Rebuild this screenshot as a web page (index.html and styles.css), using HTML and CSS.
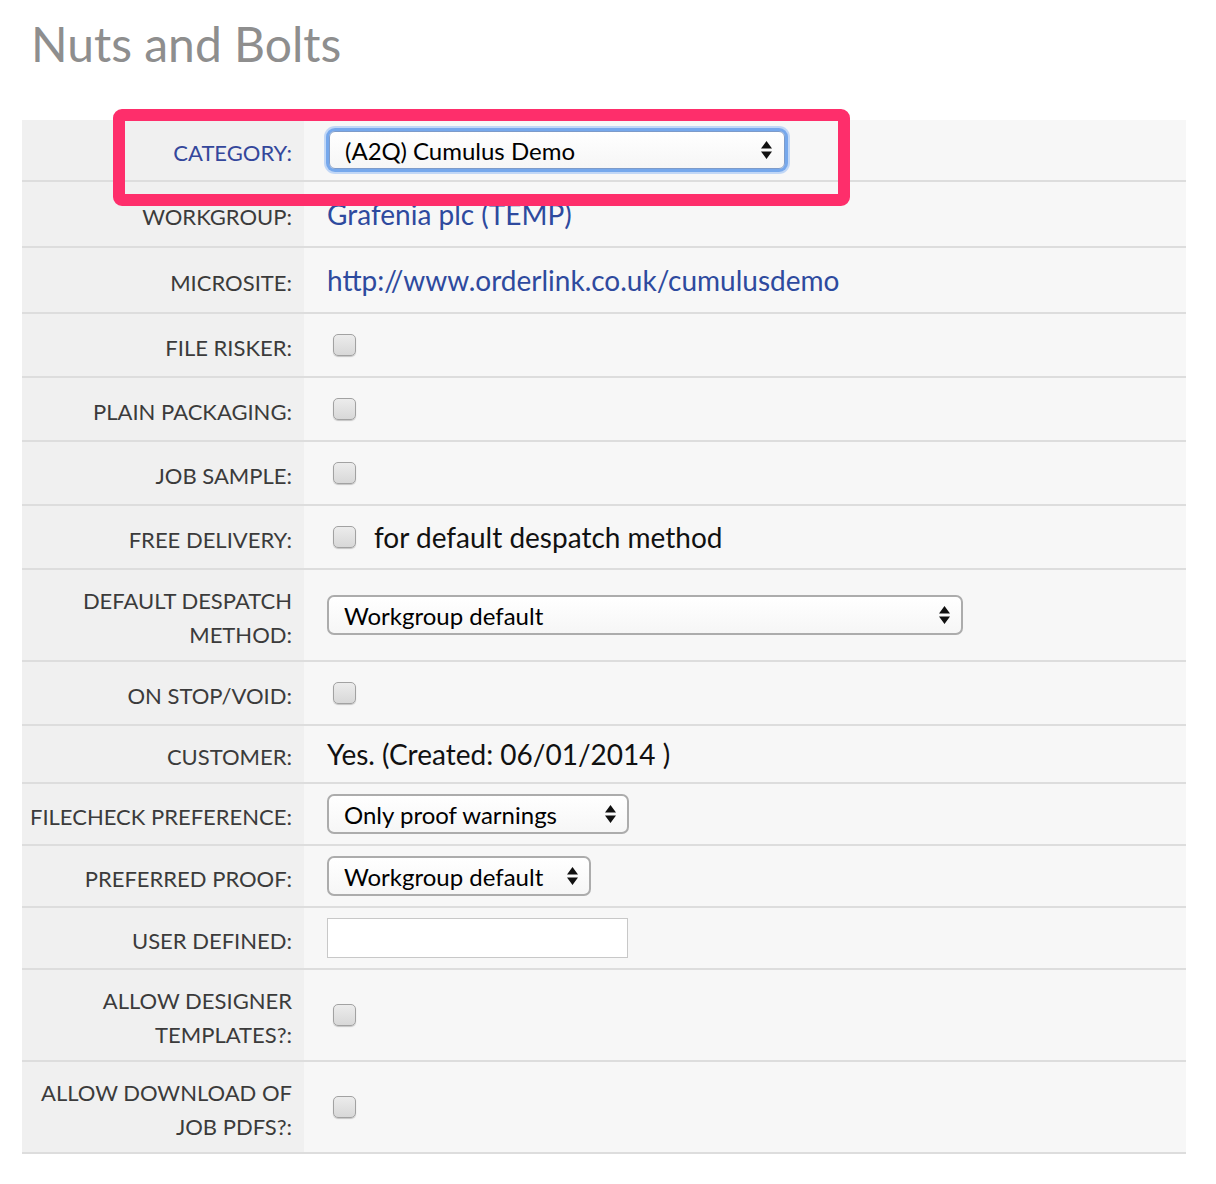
FILE: index.html
```
<!DOCTYPE html>
<html lang="en">
<head>
<meta charset="UTF-8">
<meta name="viewport" content="width=device-width, initial-scale=1.0">
<title>Nuts and Bolts</title>
<link rel="stylesheet" href="styles.css">
</head>
<body>
<h1 class="page-title">Nuts and Bolts</h1>

<div class="details">
    <div class="row">
        <div class="label label-blue">CATEGORY:</div>
        <div class="value">
            <span class="select-wrap">
                <select class="select select-focus" style="width: 456px">
                    <option>(A2Q) Cumulus Demo</option>
                </select>
                <svg class="arrows" viewBox="0 0 11 18"><path d="M0 7.5 L5.5 0 L11 7.5 Z M0 10.5 L5.5 18 L11 10.5 Z"/></svg>
            </span>
        </div>
    </div>
    <div class="row">
        <div class="label">WORKGROUP:</div>
        <div class="value value-text"><a href="#">Grafenia plc (TEMP)</a></div>
    </div>
    <div class="row">
        <div class="label">MICROSITE:</div>
        <div class="value value-text"><a href="#">http://www.orderlink.co.uk/cumulusdemo</a></div>
    </div>
    <div class="row">
        <div class="label">FILE RISKER:</div>
        <div class="value"><input type="checkbox" class="check"></div>
    </div>
    <div class="row">
        <div class="label">PLAIN PACKAGING:</div>
        <div class="value"><input type="checkbox" class="check"></div>
    </div>
    <div class="row">
        <div class="label">JOB SAMPLE:</div>
        <div class="value"><input type="checkbox" class="check"></div>
    </div>
    <div class="row">
        <div class="label">FREE DELIVERY:</div>
        <div class="value">
            <input type="checkbox" class="check">
            <span class="plain-text check-note">for default despatch method</span>
        </div>
    </div>
    <div class="row">
        <div class="label">DEFAULT DESPATCH<br>METHOD:</div>
        <div class="value">
            <span class="select-wrap">
                <select class="select" style="width: 636px">
                    <option>Workgroup default</option>
                </select>
                <svg class="arrows" viewBox="0 0 11 18"><path d="M0 7.5 L5.5 0 L11 7.5 Z M0 10.5 L5.5 18 L11 10.5 Z"/></svg>
            </span>
        </div>
    </div>
    <div class="row">
        <div class="label">ON STOP/VOID:</div>
        <div class="value"><input type="checkbox" class="check"></div>
    </div>
    <div class="row">
        <div class="label">CUSTOMER:</div>
        <div class="value"><span class="plain-text">Yes. (Created: 06/01/2014 )</span></div>
    </div>
    <div class="row">
        <div class="label">FILECHECK PREFERENCE:</div>
        <div class="value">
            <span class="select-wrap">
                <select class="select" style="width: 302px">
                    <option>Only proof warnings</option>
                </select>
                <svg class="arrows" viewBox="0 0 11 18"><path d="M0 7.5 L5.5 0 L11 7.5 Z M0 10.5 L5.5 18 L11 10.5 Z"/></svg>
            </span>
        </div>
    </div>
    <div class="row">
        <div class="label">PREFERRED PROOF:</div>
        <div class="value">
            <span class="select-wrap">
                <select class="select" style="width: 264px">
                    <option>Workgroup default</option>
                </select>
                <svg class="arrows" viewBox="0 0 11 18"><path d="M0 7.5 L5.5 0 L11 7.5 Z M0 10.5 L5.5 18 L11 10.5 Z"/></svg>
            </span>
        </div>
    </div>
    <div class="row">
        <div class="label">USER DEFINED:</div>
        <div class="value"><input type="text" class="text-input"></div>
    </div>
    <div class="row">
        <div class="label">ALLOW DESIGNER<br>TEMPLATES?:</div>
        <div class="value"><input type="checkbox" class="check"></div>
    </div>
    <div class="row">
        <div class="label">ALLOW DOWNLOAD OF<br>JOB PDFS?:</div>
        <div class="value"><input type="checkbox" class="check"></div>
    </div>

    <div class="highlight"></div>
</div>
</body>
</html>
```

FILE: styles.css
```
body, html {
    margin: 0;
    padding: 0;
}
body {
    font-family: Lato, "Open Sans", sans-serif;
    background-color: #fff;
    color: #111;
}
.page-title {
    margin: 15px 0 47px 31px;
    font-size: 48px;
    line-height: 58px;
    font-weight: normal;
    color: #8e8e8e;
}
.details {
    position: relative;
    margin-left: 22px;
    width: 1164px;
}
.row {
    display: grid;
    grid-template-columns: 282px 1fr;
    border-bottom: 2px solid #dddddd;
}
.label {
    display: flex;
    align-items: center;
    justify-content: flex-end;
    background-color: #f0f0f0;
    padding: 14px 12px 8px 0;
    text-align: right;
    white-space: nowrap;
    font-size: 22px;
    line-height: 34px;
    color: #3b3b3b;
}
.label-blue {
    color: #34479b;
}
.value {
    background-color: #f7f7f7;
    padding: 10px 23px;
    display: flex;
    align-items: center;
}
.value-text {
    font-size: 28px;
    line-height: 44px;
}
.value-text a {
    color: #2e4a9e;
    text-decoration: none;
}
.plain-text {
    font-size: 28px;
    line-height: 34px;
    color: #111;
}
.check-note {
    margin-left: 18px;
}
.check {
    appearance: none;
    -webkit-appearance: none;
    box-sizing: border-box;
    width: 23px;
    height: 22px;
    margin: 10px 0 10px 6px;
    border: 1px solid #a2a2a2;
    border-radius: 5px;
    background: linear-gradient(#ececec, #d8d8d8);
    box-shadow: 0 1px 1px rgba(0, 0, 0, 0.2);
}
.select-wrap {
    position: relative;
    display: inline-block;
}
.select {
    appearance: none;
    -webkit-appearance: none;
    height: 40px;
    padding: 0 30px 0 15px;
    border: 2px solid #acacac;
    border-radius: 7px;
    background: linear-gradient(#ffffff, #f6f6f6);
    font-family: Lato, "Open Sans", sans-serif;
    font-size: 24px;
    color: #000;
    display: block;
}
.select-focus {
    height: 38px;
    margin: 1px 0 1px 2px;
    border: 1px solid #7d9bc9;
    border-radius: 6px;
    box-shadow: 0 0 0 3px #76a8ec, 0 0 0 5px rgba(150, 190, 245, 0.55);
}
.arrows {
    position: absolute;
    right: 13px;
    top: 11px;
    width: 11px;
    height: 18px;
    fill: #111;
}
.text-input {
    width: 301px;
    height: 40px;
    box-sizing: border-box;
    margin: 0;
    border: 1px solid #c8c8c8;
    background: #fff;
}
.highlight {
    position: absolute;
    left: 91px;
    top: -11px;
    width: 713px;
    height: 73px;
    border: 12px solid #fe2e6b;
    border-radius: 9px;
}
```
